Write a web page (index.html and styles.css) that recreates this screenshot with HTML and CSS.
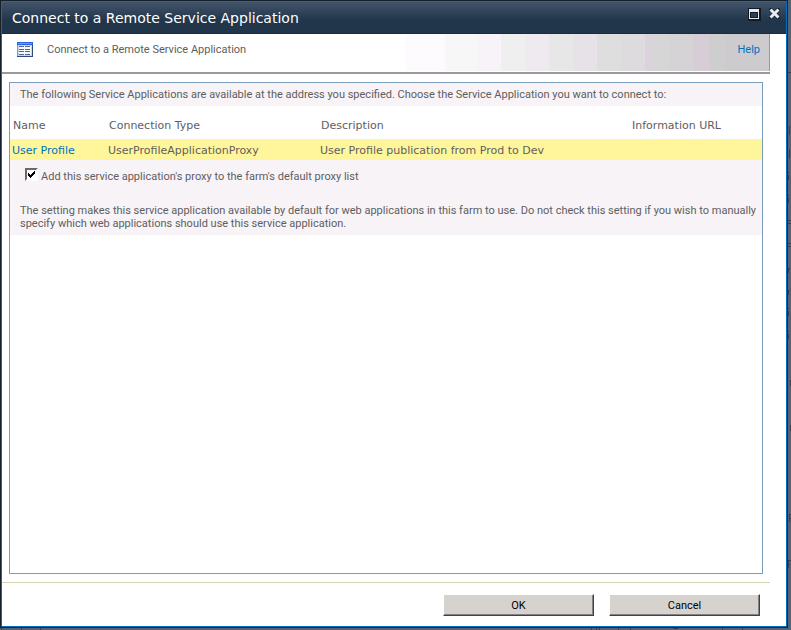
FILE: index.html
```html
<!DOCTYPE html>
<html lang="en">
<head>
    <meta charset="UTF-8">
    <meta name="viewport" content="width=device-width, initial-scale=1.0">
    <title>Connect to a Remote Service Application</title>
    <link rel="stylesheet" href="styles.css">
</head>
<body>
    <!-- Dimmed page behind the dialog -->
    <svg class="page-right" width="3" height="630" shape-rendering="crispEdges" aria-hidden="true">
        <path d="M0 72h3M1 126v9M1 149v9M0 172h1M0 175v5M0 195h1M0 198v5M0 220h3M0 223h3M0 243h3M0 246h3M0 268v5M0 268h2M0 290v5M0 290h2M0 308h1M0 311v5M0 331h1M0 334v5M2 380v6M2 425v6M1 514v8M1 514h2M1 518h2M0 560v8M0 560h3M0 564h2"/>
    </svg>
    <svg class="page-bottom" width="791" height="2" shape-rendering="crispEdges" aria-hidden="true">
        <path d="M1 0v2M21 0v2M40 0v2M591 0v2M596 0v2M599 0v2M618 0v2M630 0v2M673 0h5M722 0v2M742 0v2"/>
    </svg>

    <div class="dialog" role="dialog" aria-labelledby="dialog-title">
        <header class="title-bar">
            <h1 id="dialog-title">Connect to a Remote Service Application</h1>
            <div class="window-buttons">
                <button type="button" aria-label="Maximize">
                    <svg width="13" height="13" shape-rendering="crispEdges">
                        <rect width="13" height="13" fill="#101b27"/>
                        <rect x="1" y="1" width="10" height="10" fill="#e6e8eb"/>
                        <rect x="2" y="4" width="8" height="6" fill="#101b27"/>
                        <rect x="3" y="5" width="6" height="4" fill="#2b3f57"/>
                    </svg>
                </button>
                <button type="button" aria-label="Close">
                    <svg width="11" height="11">
                        <path d="M2 2L9 9M9 2L2 9" stroke="#101b27" stroke-width="4" stroke-linecap="square"/>
                        <path d="M1.5 1.5L9.5 9.5M9.5 1.5L1.5 9.5" stroke="#e9ebee" stroke-width="3"/>
                    </svg>
                </button>
            </div>
        </header>

        <main class="dialog-body">
            <div class="ribbon">
                <svg class="list-icon" width="16" height="15" shape-rendering="crispEdges" aria-hidden="true">
                    <rect width="16" height="15" fill="#7b9ad0"/>
                    <rect width="16" height="3" fill="#2b63e8"/>
                    <rect x="1" y="1" width="14" height="1" fill="#6d9bff"/>
                    <rect x="1" y="3" width="14" height="11" fill="#c4d6f2"/>
                    <rect x="2" y="4" width="12" height="9" fill="#f4f8fe"/>
                    <path d="M15 3h1v12H0v-1h15z" fill="#2c4a80"/>
                    <path d="M2 4h5v1H2zM8 4h5v1H8zM2 7h5v1H2zM8 7h5v1H8zM2 9h5v1H2zM8 9h5v1H8zM2 12h5v1H2zM8 12h5v1H8z" fill="#5a6885"/>
                </svg>
                <h2>Connect to a Remote Service Application</h2>
                <a href="#">Help</a>
            </div>

            <form class="connect-form">
                <div class="panel">
                    <p class="intro">The following Service Applications are available at the address you specified. Choose the Service Application you want to connect to:</p>

                    <table class="applications">
                        <thead>
                            <tr>
                                <th class="col-name">Name</th>
                                <th class="col-type">Connection Type</th>
                                <th class="col-description">Description</th>
                                <th>Information URL</th>
                            </tr>
                        </thead>
                        <tbody>
                            <tr class="selected">
                                <td><a href="#">User Profile</a></td>
                                <td>UserProfileApplicationProxy</td>
                                <td>User Profile publication from Prod to Dev</td>
                                <td></td>
                            </tr>
                        </tbody>
                    </table>

                    <div class="options">
                        <div class="option">
                            <input type="checkbox" id="default-proxy" checked>
                            <label for="default-proxy">Add this service application's proxy to the farm's default proxy list</label>
                        </div>
                        <p>The setting makes this service application available by default for web applications in this farm to use. Do not check this setting if you wish to manually specify which web applications should use this service application.</p>
                    </div>
                </div>

                <div class="actions">
                    <button type="submit">OK</button>
                    <button type="button">Cancel</button>
                </div>
            </form>
        </main>
    </div>
</body>
</html>
```

FILE: styles.css
```css
* {
    margin: 0;
    padding: 0;
    box-sizing: border-box;
}

body {
    display: flex;
    min-height: 100vh;
    padding: 0 3px 2px 0;
    background-color: #566472;
    color: #5e5e5e;
    font-family: Tahoma, Roboto, sans-serif;
    font-size: 11px;
    line-height: 13px;
    position: relative;
    overflow: hidden;
}

a {
    color: #0072bc;
    text-decoration: none;
}

/* Page behind */
.page-right,
.page-bottom {
    position: absolute;
    stroke: #35424f;
    fill: none;
}

.page-right {
    top: 0;
    right: 0;
}

.page-bottom {
    bottom: 0;
    left: 0;
}

/* Dialog */
.dialog {
    display: flex;
    flex-direction: column;
    flex: 1;
    border: 1px solid #0072c6;
    outline: 1px solid #14202c;
    margin: 1px;
    background-color: #fff;
    position: relative;
}

.title-bar {
    display: flex;
    justify-content: space-between;
    height: 32px;
    padding: 0 6px 0 10px;
    background: linear-gradient(#42546a, #21354b 60%, #21354b);
    border-bottom: 1px solid #182b42;
}

.title-bar h1 {
    color: #fff;
    font-family: Verdana, "DejaVu Sans", sans-serif;
    font-size: 14px;
    font-weight: normal;
    line-height: 32px;
}

.window-buttons {
    display: flex;
    align-items: flex-start;
    gap: 8px;
    padding-top: 6px;
}

.window-buttons button {
    border: none;
    background: none;
    cursor: pointer;
}

.window-buttons svg {
    display: block;
}

.dialog-body {
    display: flex;
    flex-direction: column;
    flex: 1;
    margin-right: 16px;
}

/* Ribbon */
.ribbon {
    display: flex;
    align-items: flex-start;
    height: 40px;
    padding: 8px 10px 0 15px;
    border-bottom: 2px solid #9b999c;
    line-height: 15px;
    background: linear-gradient(to right,
        #fefbff 40px, #f7f7f7 40px, #f7f7f7 72px,
        #f8f3f8 72px, #f8f3f8 96px, #efefef 96px, #efefef 120px,
        #efeaef 120px, #efeaef 144px, #e7e7e7 144px, #e7e7e7 168px,
        #e7e2e7 168px, #e7e2e7 192px, #dedede 192px, #dedede 216px,
        #dedbde 216px, #dedbde 240px, #dbd3db 240px, #dbd3db 248px,
        #d6d6d6 248px, #d6d6d6 264px, #d6d3d6 264px, #d6d3d6 288px,
        #d6cdd6 288px, #d6cdd6 304px, #cecece 304px, #cecece 320px,
        #cecbce 320px, #cecbce 364px, #9b999c 364px) right top / 365px 37px no-repeat;
}

.ribbon h2 {
    flex: 1;
    margin-left: 14px;
    font-size: 11px;
    font-weight: normal;
}

/* Form */
.connect-form {
    display: flex;
    flex-direction: column;
    flex: 1;
}

.panel {
    flex: 1;
    margin: 8px 7px 8px 7px;
    border: 1px solid #7b9ebd;
}

.intro {
    padding: 5px 10px;
    background-color: #f7f3f7;
}

.applications {
    width: 100%;
    border-collapse: collapse;
    table-layout: fixed;
    font-family: Verdana, "DejaVu Sans", sans-serif;
}

.applications th {
    height: 33px;
    padding: 6px 3px 0;
    font-weight: normal;
    text-align: left;
}

.applications td {
    height: 21px;
    padding: 2px 2px 0;
}

.col-name {
    width: 96px;
}

.col-type {
    width: 212px;
}

.col-description {
    width: 311px;
}

.selected {
    background-color: #fff69c;
}

.options {
    padding: 8px 5px 5px 10px;
    background-color: #f7f3f7;
}

.option {
    display: flex;
    gap: 3px;
    margin-bottom: 19px;
    padding-left: 5px;
}

.option input {
    appearance: none;
    width: 13px;
    height: 13px;
    border: 2px solid;
    border-color: #6b6963 #fff #fff #6b6963;
    background: #fff url("data:image/svg+xml,%3Csvg xmlns='http://www.w3.org/2000/svg' width='9' height='9' shape-rendering='crispEdges'%3E%3Cpath d='M1 3h1v1h1v1h1v-1h1v-1h1v-1h1v-1h1v3h-1v1h-1v1h-1v1h-1v1h-1v-1h-1v-1h-1z'/%3E%3C/svg%3E") no-repeat;
}

.option label {
    line-height: 17px;
}

/* Buttons */
.actions {
    display: flex;
    justify-content: flex-end;
    gap: 15px;
    padding: 11px 10px 10px;
    border-top: 1px solid #d6d3b5;
}

.actions button {
    width: 151px;
    height: 22px;
    border: 1px solid;
    border-color: #fff #424142 #424142 #fff;
    box-shadow: inset -1px -1px #848284;
    background-color: #d6d3ce;
    color: #000;
    font: inherit;
}
```
